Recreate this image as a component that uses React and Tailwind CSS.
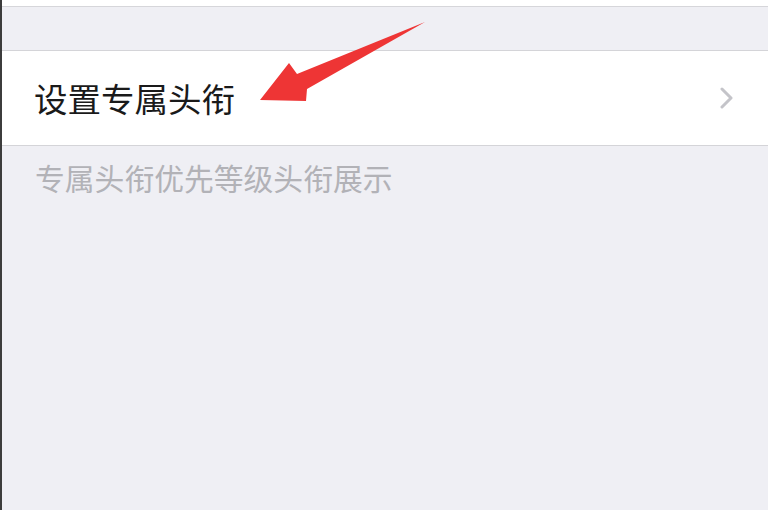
export default function App() {
  return (
    <div
      className="relative flex h-[510px] w-[768px] overflow-hidden bg-[#efeff4]"
      style={{ fontFamily: '"Noto Sans CJK SC", "Noto Sans", sans-serif' }}
    >
      <div className="w-[2px] bg-[#3c3c3c]" />
      <div className="flex flex-1 flex-col">
        <div className="h-[7px] border-b border-[#d6d6da] bg-white" />
        <div className="h-[43px]" />
        <div className="flex h-[96px] items-center justify-between border-y border-[#d4d4d8] bg-white pl-[32px] pr-[34px]">
          <span className="text-[33.5px] leading-none text-[#1a1a1a]">设置专属头衔</span>
          <svg width="14" height="22" viewBox="0 0 14 22" fill="none">
            <path d="M2 2 L11 11 L2 20" stroke="#c4c4c9" strokeWidth="3" strokeLinecap="round" strokeLinejoin="round" />
          </svg>
        </div>
        <p className="mt-[13px] pl-[33px] text-[29.8px] leading-[36px] text-[#b2b2b7]">专属头衔优先等级头衔展示</p>
      </div>
      <svg className="pointer-events-none absolute left-0 top-0" width="768" height="510" viewBox="0 0 768 510">
        <polygon points="260,100 289,63 297,74 425,22 307,89 306,101" fill="#ee3535" />
      </svg>
    </div>
  );
}
